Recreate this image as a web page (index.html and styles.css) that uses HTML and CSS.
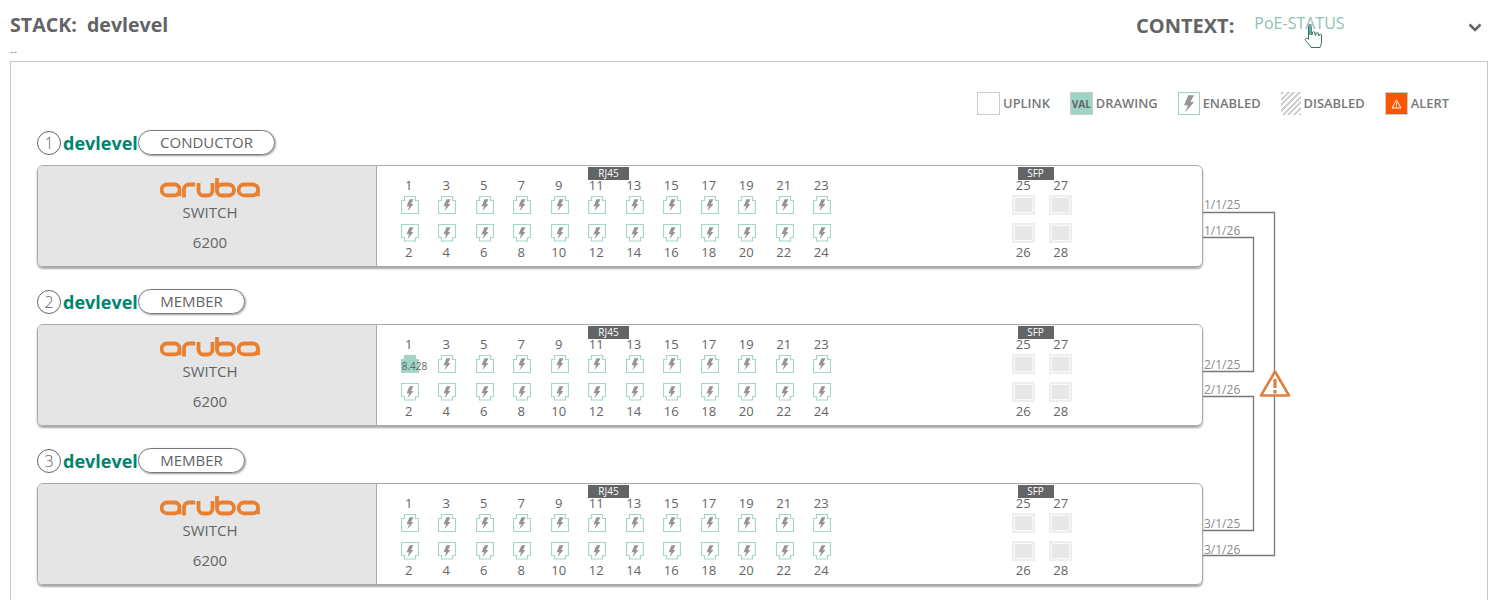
FILE: index.html
```html
<!DOCTYPE html>
<html lang="en">
<head>
    <meta charset="UTF-8">
    <meta name="viewport" content="width=device-width, initial-scale=1.0">
    <title>Stack devlevel</title>
    <link rel="stylesheet" href="styles.css">
</head>
<body>
    <svg class="defs" width="0" height="0">
        <symbol id="bolt" viewBox="0 0 18 18">
            <path d="M12.500 3.200H8.500L5.500 10.200H8.200L6.400 15.200 12.500 7.900H10z" fill="#949597"/>
        </symbol>
        <symbol id="logo" viewBox="0 0 100 20">
            <g fill="none" stroke="#e9802f" stroke-width="3.800">
                <path d="M19.500 18.300V11.500a5 5 0 0 0-5-5H7a5.300 5.300 0 0 0 0 10.800h7.500a5 5 0 0 0 5-5"/>
                <path d="M24 19.500V11.500a5 5 0 0 1 5-5h6"/>
                <path d="M38.500 5v7.500a5 5 0 0 0 5 5h4a5 5 0 0 0 5-5V5"/>
                <path d="M57 0v12.500a5 5 0 0 0 5 5h6.500a5.500 5.500 0 0 0 0-11H62a5 5 0 0 0-5 5"/>
                <path d="M98 18.300V11.500a5 5 0 0 0-5-5H84a5.300 5.300 0 0 0 0 10.800h9a5 5 0 0 0 5-5"/>
            </g>
        </symbol>
    </svg>

    <header class="top">
        <h1 class="stack-title">STACK:&nbsp; devlevel</h1>
        <div class="context">
            <span class="context-label">CONTEXT:</span>
            <span class="context-value">PoE-STATUS</span>
            <svg class="chevron" width="14" height="9" viewBox="0 0 14 9">
                <path d="M1.500 1.500 7 7l5.500-5.500" fill="none" stroke="#636466" stroke-width="2.600"/>
            </svg>
        </div>
        <svg class="hand" width="19" height="25" viewBox="0 0 19 25">
            <path d="M4.500 2.500a1.400 1.400 0 0 1 2.800 0v8l1 .2V9a1.300 1.300 0 0 1 2.600 0v2l1 .2V10a1.300 1.300 0 0 1 2.600 0v1.500l.8.200V11a1.200 1.200 0 0 1 2.200 0v6c0 3-1 4-1.500 6.500H7C6 21 4 19.500 1.500 16.500c-1-1.500.5-3 2-2l1 1z" fill="#fff" stroke="#3b6f68"/>
            <path d="M5.300 2.500a.6.600 0 0 1 1.200 0v8.500H5.300z" fill="#0a7f6e"/>
        </svg>
    </header>
    <div class="dashes">--</div>

    <main class="panel">
        <div class="legend">
            <div class="legend-item"><span class="swatch"></span>UPLINK</div>
            <div class="legend-item"><span class="swatch swatch-drawing">VAL</span>DRAWING</div>
            <div class="legend-item"><span class="swatch swatch-enabled"><svg width="21" height="21" viewBox="2 2 14 14"><use href="#bolt" width="18" height="18"/></svg></span>ENABLED</div>
            <div class="legend-item"><span class="swatch swatch-disabled"></span>DISABLED</div>
            <div class="legend-item">
                <span class="swatch swatch-alert">
                    <svg width="11" height="10" viewBox="0 0 11 10">
                        <path d="M5.500 1 10 9H1z" fill="none" stroke="#fff"/>
                        <path d="M5.500 3.500v3M5.500 7.200v1" stroke="#fff"/>
                    </svg>
                </span>ALERT
            </div>
        </div>

        <div class="stacks" id="stacks">
            <svg class="wires" width="100" height="380" viewBox="0 0 100 380">
                <g fill="none" stroke="#777879" stroke-width="1.300">
                    <path d="M0 22.500H71.500V365.500H0"/>
                    <path d="M0 47.500H50.500V181.500H0"/>
                    <path d="M0 206.500H50.500V340.500H0"/>
                </g>
                <g class="wire-labels">
                    <text x="1" y="19">1/1/25</text>
                    <text x="1" y="45">1/1/26</text>
                    <text x="1" y="179">2/1/25</text>
                    <text x="1" y="204">2/1/26</text>
                    <text x="1" y="338">3/1/25</text>
                    <text x="1" y="364">3/1/26</text>
                </g>
                <path d="M72 181.500 58 205.500H86z" fill="#fff" stroke="#e07f42" stroke-width="2.600" stroke-linejoin="round"/>
                <path d="M72 189v9M72 200v3.500" stroke="#e07f42" stroke-width="3.200"/>
            </svg>
        </div>
    </main>

    <script src="script.js"></script>
</body>
</html>
```

FILE: styles.css
```css
* {
    box-sizing: border-box;
    margin: 0;
    padding: 0;
}
html, body {
    height: 600px;
    overflow: hidden;
}
body {
    background-color: #ffffff;
    color: #636466;
    font-family: "Open Sans", "Liberation Sans", sans-serif;
}
.defs {
    position: absolute;
}

/* header */
.top {
    position: relative;
    display: flex;
    justify-content: space-between;
    height: 44px;
    padding: 12px 17px 0 10px;
}
.stack-title {
    font-size: 19.600px;
    line-height: 26px;
    font-weight: 700;
}
.context {
    display: flex;
    width: 346px;
}
.context-label {
    font-size: 20px;
    line-height: 28px;
    font-weight: 700;
}
.context-value {
    margin: -1px 0 0 20px;
    font-size: 16px;
    line-height: 24px;
    color: #8fc2b6;
}
.chevron {
    margin: 11px 0 0 auto;
}
.hand {
    position: absolute;
    left: 1304px;
    top: 24px;
}
.dashes {
    height: 17px;
    padding-left: 10px;
    font-size: 11px;
    line-height: 14px;
    color: #8a8b8d;
}

/* panel */
.panel {
    margin: 0 11px 0 10px;
    height: 560px;
    padding: 30px 38px 0 26px;
    border: 1px solid #c8c8c8;
}
.legend {
    display: flex;
    justify-content: flex-end;
    gap: 20px;
    height: 23px;
    margin-bottom: 15px;
}
.legend-item {
    display: flex;
    align-items: flex-start;
    gap: 3px;
    font-size: 12.900px;
    line-height: 22px;
    font-weight: 600;
    color: #77787a;
}
.swatch {
    display: flex;
    align-items: center;
    justify-content: center;
    width: 23px;
    height: 23px;
    border: 1px solid #cccccc;
}
.swatch-drawing {
    background-color: #9fd5c7;
    font-size: 10px;
    font-weight: 700;
    color: #636466;
}
.swatch-enabled {
    width: 22px;
    border-color: #9bd4c5;
}
.swatch-disabled {
    width: 20px;
    border: none;
    background: repeating-linear-gradient(-45deg, #d0d0d0 0, #d0d0d0 2px, #ffffff 2px, #ffffff 4px);
}
.swatch-alert {
    background-color: #ff5500;
}

/* switches */
.stacks {
    position: relative;
}
.wires {
    position: absolute;
    left: 1166px;
    top: 60px;
}
.wire-labels {
    font-size: 12px;
    fill: #8a8b8d;
}
.member {
    margin-bottom: 22px;
}
.member-head {
    display: flex;
    align-items: center;
    height: 25px;
    margin-bottom: 10px;
}
.member-no {
    display: flex;
    align-items: center;
    justify-content: center;
    width: 24px;
    height: 24px;
    border: 1px solid #636466;
    border-radius: 50%;
    font-size: 16px;
    font-weight: 300;
}
.member-name {
    margin-left: 2px;
    width: 75px;
    font-size: 18px;
    font-weight: 700;
    color: #01846e;
}
.role {
    display: flex;
    align-items: center;
    justify-content: center;
    height: 25px;
    padding-bottom: 2px;
    border: 1px solid #777879;
    border-radius: 13px;
    box-shadow: 1px 1px 2px rgba(0, 0, 0, 0.4);
    font-size: 15px;
}
.role-conductor {
    width: 137px;
}
.role-member {
    width: 107px;
}
.switch {
    display: flex;
    width: 1166px;
    height: 102px;
    border: 1px solid #aaaaaa;
    border-radius: 6px;
    box-shadow: 0 2px 2px rgba(0, 0, 0, 0.35);
    overflow: hidden;
}
.switch-info {
    display: flex;
    flex-direction: column;
    align-items: center;
    width: 339px;
    padding: 12px 0 0 6px;
    border-right: 1px solid #aaaaaa;
    background-color: #e5e5e5;
    font-size: 15px;
    line-height: 20px;
}
.logo {
    width: 100px;
    height: 20px;
}
.switch-type {
    margin-top: 4px;
}
.switch-model {
    margin-top: 10px;
    font-weight: 500;
}
.switch-ports {
    display: flex;
    gap: 164.500px;
    padding-left: 13px;
}
.port-group {
    display: flex;
    flex-direction: column;
    align-items: center;
}
.group-tag {
    width: 41px;
    height: 13px;
    margin: 1px 13px -2px 0;
    background-color: #636466;
    color: #ffffff;
    font-size: 10px;
    line-height: 13px;
    text-align: center;
}
.group-tag-sfp {
    width: 36px;
}
.port-cols {
    display: flex;
}
.port-col {
    display: flex;
    flex-direction: column;
    align-items: center;
    width: 37.500px;
    font-size: 13px;
    line-height: 14px;
}
.port-col span:first-child {
    margin-bottom: 3px;
}
.port-col span:last-child {
    margin-top: 2px;
}
.port {
    position: relative;
    display: flex;
    align-items: center;
    justify-content: center;
    width: 23px;
    height: 20px;
}
.port svg {
    margin-left: 2px;
}
.port + .port {
    margin-top: 8px;
}
.port-drawing {
    position: absolute;
    left: 4.500px;
    top: 4px;
    font-size: 10px;
    line-height: 12px;
    color: #636466;
}
.sfp {
    border: 2px solid #eeeeee;
    box-shadow: inset 0 0 0 1px #f8f8f8;
    background-color: #e6e7e9;
}
```

FILE: script.js
```js
const stacks = document.getElementById("stacks");

const members = [
    { no: 1, role: "CONDUCTOR", roleClass: "role-conductor" },
    { no: 2, role: "MEMBER", roleClass: "role-member", drawing: "8.428" },
    { no: 3, role: "MEMBER", roleClass: "role-member" }
];

function rjPort(flip, filled) {
    const outline = flip
        ? "M.5.5h17v13h-3v3.500h-11v-3.500h-3z"
        : "M.5 4.500h3v-4h11v4h3v13H.5z";
    const fill = filled ? "#9fd5c7" : "#ffffff";
    const bolt = filled ? "" : '<use href="#bolt" width="18" height="18"/>';
    return `<svg width="18" height="18" viewBox="0 0 18 18"><path d="${outline}" fill="${fill}" stroke="#a3d7ca" stroke-width="1.200"/>${bolt}</svg>`;
}

function rjColumn(odd, drawing) {
    const top = drawing
        ? rjPort(false, true) + `<span class="port-drawing">${drawing}</span>`
        : rjPort(false, false);
    return `<div class="port-col">
        <span>${odd}</span>
        <div class="port">${top}</div>
        <div class="port">${rjPort(true, false)}</div>
        <span>${odd + 1}</span>
    </div>`;
}

function sfpColumn(odd) {
    return `<div class="port-col">
        <span>${odd}</span>
        <div class="port sfp"></div>
        <div class="port sfp"></div>
        <span>${odd + 1}</span>
    </div>`;
}

function memberHtml(m) {
    let rj = "";
    for (let i = 1; i <= 23; i += 2) {
        rj += rjColumn(i, i === 1 ? m.drawing : null);
    }
    return `<section class="member">
        <div class="member-head">
            <span class="member-no">${m.no}</span>
            <span class="member-name">devlevel</span>
            <span class="role ${m.roleClass}">${m.role}</span>
        </div>
        <div class="switch">
            <div class="switch-info">
                <svg class="logo"><use href="#logo"/></svg>
                <div class="switch-type">SWITCH</div>
                <div class="switch-model">6200</div>
            </div>
            <div class="switch-ports">
                <div class="port-group">
                    <div class="group-tag">RJ45</div>
                    <div class="port-cols">${rj}</div>
                </div>
                <div class="port-group">
                    <div class="group-tag group-tag-sfp">SFP</div>
                    <div class="port-cols">${sfpColumn(25)}${sfpColumn(27)}</div>
                </div>
            </div>
        </div>
    </section>`;
}

stacks.insertAdjacentHTML("beforeend", members.map(memberHtml).join(""));
```
